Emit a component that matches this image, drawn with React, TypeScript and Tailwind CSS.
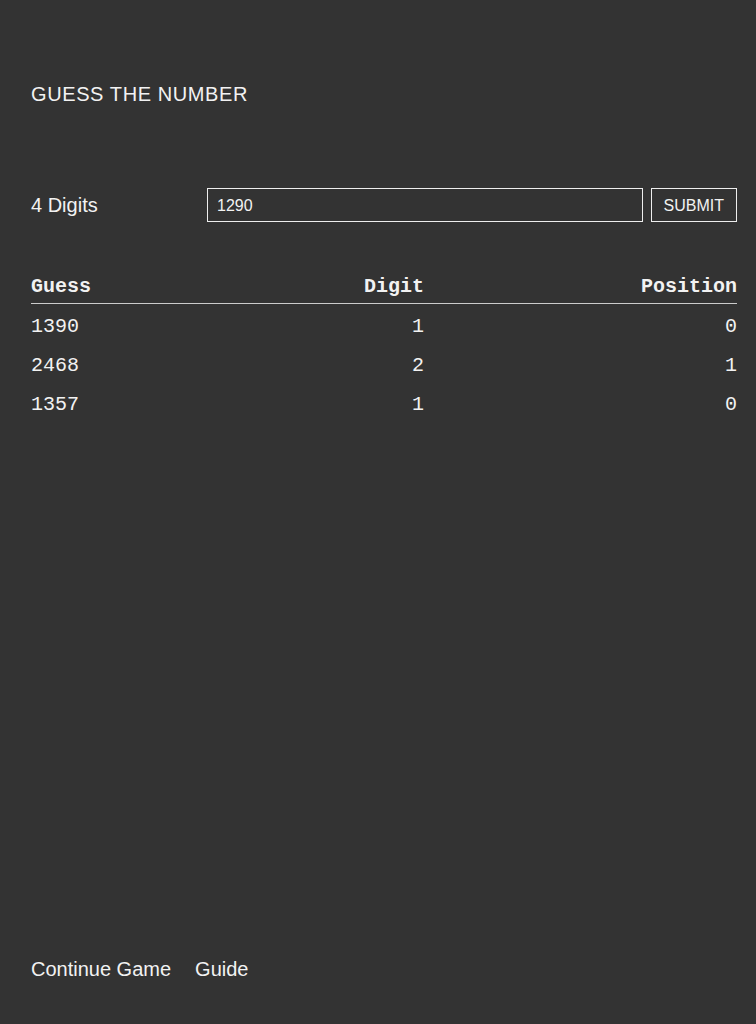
const rows = [
  { guess: "1390", digit: 1, position: 0 },
  { guess: "2468", digit: 2, position: 1 },
  { guess: "1357", digit: 1, position: 0 },
];

export default function App() {
  return (
    <div className="flex min-h-screen flex-col bg-[#333333] pl-[31px] pr-[19px] text-[#f2f2f2] [font-family:'Liberation_Sans',Arial,sans-serif]">
      <h1 className="mt-[82px] text-[20px] leading-6 tracking-[0.03em]">GUESS THE NUMBER</h1>

      <div className="mt-[82px] flex items-center">
        <span className="w-[176px] text-[20px]">4 Digits</span>
        <input
          defaultValue="1290"
          className="h-[34px] flex-1 border border-[#eeeeee] bg-transparent px-[9px] pt-[2px] text-[16px] text-[#f2f2f2] outline-none"
        />
        <button className="ml-2 h-[34px] border border-[#eeeeee] px-3 pt-[2px] text-[16px]">SUBMIT</button>
      </div>

      <div className="mt-[51px] [font-family:'Liberation_Mono','Courier_New',monospace] text-[20px]">
        <div className="grid grid-cols-[200px_193px_1fr] border-b border-[#cccccc] pb-[2px] font-bold leading-7">
          <span>Guess</span>
          <span className="text-right">Digit</span>
          <span className="text-right">Position</span>
        </div>
        {rows.map((r) => (
          <div key={r.guess} className="grid grid-cols-[200px_193px_1fr] pt-[7px] leading-[32px]">
            <span>{r.guess}</span>
            <span className="text-right">{r.digit}</span>
            <span className="text-right">{r.position}</span>
          </div>
        ))}
      </div>

      <div className="mt-auto mb-[40px] flex gap-6 text-[20px]">
        <a>Continue Game</a>
        <a>Guide</a>
      </div>
    </div>
  );
}
